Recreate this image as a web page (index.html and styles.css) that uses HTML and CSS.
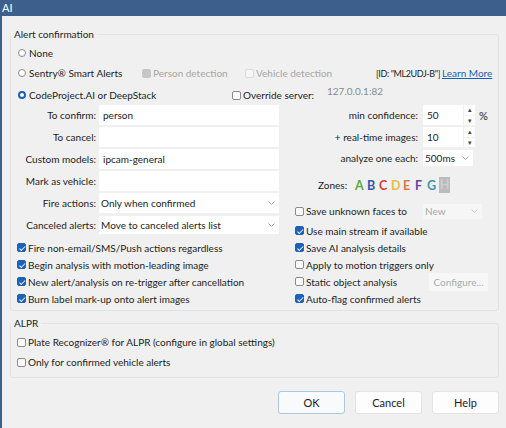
FILE: index.html
```html
<!DOCTYPE html>
<html>
<head>
<meta charset="utf-8">
<link rel="stylesheet" href="styles.css">
</head>
<body>
<div class="window">
  <div class="titlebar">AI</div>
  <div class="content">
    <fieldset class="group main">
      <legend>Alert confirmation</legend>
      <div class="opt-row">
        <span class="item w-sentry"><span class="rb"></span>None</span>
      </div>
      <div class="opt-row">
        <span class="item w-sentry"><span class="rb"></span>Sentry® Smart Alerts</span>
        <span class="item w-person dis"><span class="cb dis-on"></span>Person detection</span>
        <span class="item w-vehicle dis"><span class="cb dis-off"></span>Vehicle detection</span>
        <span class="item w-id">[ID: "ML2UDJ-B"]</span>
        <span class="link">Learn More</span>
      </div>
      <div class="opt-row">
        <span class="item w-cp"><span class="rb on"></span>CodeProject.AI or DeepStack</span>
        <span class="item w-override"><span class="cb"></span>Override server:</span>
        <span class="server">127.0.0.1:82</span>
      </div>

      <div class="cols">
        <div class="form-left">
          <label class="lbl">To confirm:</label><div class="field">person</div>
          <label class="lbl">To cancel:</label><div class="field"></div>
          <label class="lbl">Custom models:</label><div class="field">ipcam-general</div>
          <label class="lbl">Mark as vehicle:</label><div class="field"></div>
          <label class="lbl">Fire actions:</label><div class="field select">Only when confirmed<svg class="chev" width="7" height="4" viewBox="0 0 7 4"><path d="M0.5 0.5 L3.5 3.5 L6.5 0.5" fill="none" stroke="#a0a0a0" stroke-width="0.9"/></svg></div>
          <label class="lbl">Canceled alerts:</label><div class="field select short">Move to canceled alerts list<svg class="chev" width="7" height="4" viewBox="0 0 7 4"><path d="M0.5 0.5 L3.5 3.5 L6.5 0.5" fill="none" stroke="#a0a0a0" stroke-width="0.9"/></svg></div>
        </div>

        <div class="form-right">
          <div class="r-row h20">
            <label class="rlbl">min confidence:</label>
            <div class="spin"><div class="spin-val">50</div><div class="spin-btns"><span class="sb">▴</span><span class="sb">▾</span></div></div>
            <span class="unit">%</span>
          </div>
          <div class="r-row h20">
            <label class="rlbl">+ real-time images:</label>
            <div class="spin"><div class="spin-val">10</div><div class="spin-btns"><span class="sb">▴</span><span class="sb">▾</span></div></div>
          </div>
          <div class="r-row h18">
            <label class="rlbl">analyze one each:</label>
            <div class="field select ms">500ms<svg class="chev" width="7" height="4" viewBox="0 0 7 4"><path d="M0.5 0.5 L3.5 3.5 L6.5 0.5" fill="none" stroke="#a0a0a0" stroke-width="0.9"/></svg></div>
          </div>
          <div class="zones-row">
            <span class="zones-lbl">Zones:</span>
            <span class="zones">
              <span class="z za">A</span><span class="z zb">B</span><span class="z zc">C</span><span class="z zd">D</span><span class="z ze">E</span><span class="z zf">F</span><span class="z zg">G</span><span class="z zh">H</span>
            </span>
          </div>
          <div class="r-row faces">
            <span class="item w-faces"><span class="cb"></span>Save unknown faces to</span>
            <div class="field select dsel">New<svg class="chev" width="7" height="4" viewBox="0 0 7 4"><path d="M0.5 0.5 L3.5 3.5 L6.5 0.5" fill="none" stroke="#c8c8c8" stroke-width="0.9"/></svg></div>
          </div>
          <div class="r-row h17">
            <span class="item"><span class="cb on"></span>Use main stream if available</span>
          </div>
        </div>
      </div>

      <div class="checks">
        <span class="item"><span class="cb on"></span>Fire non-email/SMS/Push actions regardless</span>
        <span class="item"><span class="cb on"></span>Save AI analysis details</span>
        <span class="item"><span class="cb on"></span>Begin analysis with motion-leading image</span>
        <span class="item"><span class="cb"></span>Apply to motion triggers only</span>
        <span class="item"><span class="cb on"></span>New alert/analysis on re-trigger after cancellation</span>
        <span class="item static"><span class="static-txt"><span class="cb"></span>Static object analysis</span><span class="cfg">Configure...</span></span>
        <span class="item"><span class="cb on"></span>Burn label mark-up onto alert images</span>
        <span class="item"><span class="cb on"></span>Auto-flag confirmed alerts</span>
      </div>
    </fieldset>

    <fieldset class="group alpr">
      <legend>ALPR</legend>
      <div class="alpr-row"><span class="item"><span class="cb"></span>Plate Recognizer® for ALPR (configure in global settings)</span></div>
      <div class="alpr-row"><span class="item"><span class="cb"></span>Only for confirmed vehicle alerts</span></div>
    </fieldset>

    <div class="buttons">
      <button class="btn default">OK</button>
      <button class="btn">Cancel</button>
      <button class="btn">Help</button>
    </div>
  </div>
</div>
</body>
</html>
```

FILE: styles.css
```css
* { box-sizing: border-box; }
html, body { margin: 0; padding: 0; }
body {
  width: 506px;
  height: 428px;
  overflow: hidden;
  background: #f0f0f0;
  font-family: Lato, "Noto Sans", sans-serif;
  font-size: 10px;
  color: #1c1c1c;
}
.window {
  height: 428px;
  border-left: 2px solid #3d5f8c;
  display: flex;
  flex-direction: column;
}
.titlebar {
  height: 16px;
  background: #3d5f8c;
  color: #fff;
  line-height: 15px;
  margin-left: -2px;
  padding-left: 2px;
  font-size: 11px;
}
.content {
  padding: 0 7px 0 8px;
}
.group {
  margin: 0;
  padding: 0;
  border: 1px solid #e2e2e2;
  border-radius: 3px;
  min-width: 0;
}
.group legend {
  padding: 0 3px;
  height: 16px;
  line-height: 16px;
}
.main { margin-top: 10px; padding-bottom: 3px; }
.opt-row {
  display: flex;
  align-items: center;
  height: 20px;
  padding-left: 7px;
  white-space: nowrap;
}
.opt-row:first-of-type { margin-top: 1px; }
.opt-row:nth-of-type(3) { margin-top: 2px; }
.item {
  display: inline-flex;
  align-items: center;
  white-space: nowrap;
}
.w-sentry { width: 124px; }
.w-person { width: 103px; }
.w-vehicle { width: 131px; }
.w-id { width: 66px; font-size: 9px; letter-spacing: -0.4px; }
.w-cp { width: 214px; }
.w-override { width: 95px; }
.dis { color: #a6a6a6; }
.link { color: #1a5fb4; text-decoration: underline; white-space: nowrap; }
.server { color: #8a8a8a; align-self: flex-start; margin-top: 0px; }

.rb {
  width: 8px; height: 8px;
  border-radius: 50%;
  border: 1px solid #8a8a8a;
  background: #fff;
  margin-right: 3px;
  flex: none;
}
.rb.on { border: 2.5px solid #1a5fb4; }
.cb {
  position: relative;
  width: 9px; height: 9px;
  border: 1px solid #8a8a8a;
  border-radius: 2px;
  background: #fafafa;
  margin-right: 2px;
  flex: none;
}
.cb.on { background: #1c62b9; border-color: #1c62b9; }
.cb.on::after {
  content: "";
  position: absolute;
  left: 2.5px; top: 0.5px;
  width: 2px; height: 4.5px;
  border: solid #fff;
  border-width: 0 1.3px 1.3px 0;
  transform: rotate(45deg);
}
.cb.dis-on { background: #c6c6c6; border-color: #c6c6c6; }
.cb.dis-off { border-color: #dcdcdc; background: #f6f6f6; }

.cols {
  display: flex;
  gap: 16px;
}
.form-left {
  display: grid;
  grid-template-columns: 85px 180px;
  grid-auto-rows: 20px;
  column-gap: 3px;
  row-gap: 2px;
  width: 268px;
}
.lbl {
  text-align: right;
  align-self: center;
  white-space: nowrap;
}
.field {
  background: #fff;
  padding-left: 4px;
  display: flex;
  align-items: center;
  height: 100%;
  white-space: nowrap;
}
.select { padding-left: 2px; justify-content: space-between; padding-right: 4px; }
.select.short { height: 18px; align-self: center; }
.chev { flex: none; }

.form-right {
  display: flex;
  flex-direction: column;
  width: 203px;
}
.r-row {
  display: grid;
  grid-template-columns: 123px auto auto;
  column-gap: 5px;
  align-items: center;
  justify-content: start;
}
.h20 { height: 20px; margin-bottom: 2px; }
.h18 { height: 18px; }
.h17 { height: 17px; }
.rlbl { text-align: right; white-space: nowrap; }
.spin { display: flex; height: 20px; }
.spin-val {
  width: 40px; background: #fff; padding-left: 4px;
  display: flex; align-items: center;
}
.spin-btns {
  display: flex; flex-direction: column; gap: 1px;
  margin-left: 1px; width: 11px;
}
.sb {
  flex: 1; background: #fff; color: #444;
  font-size: 7px; line-height: 9px; text-align: center;
}
.unit { margin-left: -1px; font-size: 11px; }
.ms { width: 50px; height: 16px; }
.zones-row {
  height: 20px;
  margin-top: 8px;
  margin-bottom: 7px;
  display: flex;
  align-items: center;
  padding-left: 23px;
}
.zones-lbl { width: 37px; }
.zones { display: flex; align-items: center; font-weight: 700; font-size: 12.5px; }
.z { width: 12px; text-align: left; }
.za { color: #58ad3a; }
.zb { color: #3a56ad; }
.zc { color: #d53a3f; }
.zd { color: #e6c042; }
.ze { color: #d9793b; }
.zf { color: #6b3f9f; }
.zg { color: #3f98a6; }
.zh { color: #cfcfcf; background: #bcbcbc; width: 11px; height: 16px; line-height: 16px; text-align: center; }
.faces { height: 18px; margin-bottom: 2px; grid-template-columns: 123px auto; }
.dsel { width: 59px; height: 15px; background: #f6f6f6; color: #a8a8a8; }

.checks {
  display: grid;
  grid-template-columns: 278px 1fr;
  grid-auto-rows: 17px;
  padding-left: 6px;
  align-items: center;
}
.static { justify-content: space-between; width: 193px; }
.static-txt { display: inline-flex; align-items: center; }
.cfg {
  width: 59px; height: 18px; background: #f7f7f7; color: #ababab;
  display: flex; align-items: center; justify-content: center;
}

.alpr { margin-top: 4px; padding-bottom: 5px; padding-top: 1px; }
.alpr-row {
  height: 20px;
  padding-left: 6px;
  display: flex;
  align-items: center;
}
.buttons {
  display: flex;
  justify-content: flex-end;
  gap: 10px;
  margin-top: 13px;
}
.btn {
  font: inherit;
  font-size: 11px;
  color: #1c1c1c;
  width: 67px;
  height: 23px;
  background: #fdfdfd;
  border: 1px solid #e3e3e3;
  border-radius: 3px;
  padding: 0;
}
.btn.default { border-color: #a9c8e6; background: #f8fafc; }
```
